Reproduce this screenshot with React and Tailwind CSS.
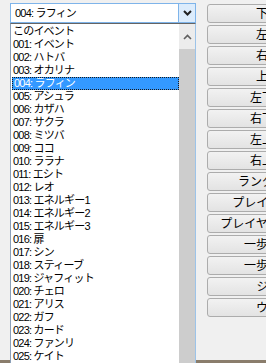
import React from 'react';

const items = [
  'このイベント',
  '001: イベント',
  '002: ハトバ',
  '003: オカリナ',
  '004: ラフィン',
  '005: アシュラ',
  '006: カザハ',
  '007: サクラ',
  '008: ミツバ',
  '009: ココ',
  '010: ララナ',
  '011: エシト',
  '012: レオ',
  '013: エネルギー1',
  '014: エネルギー2',
  '015: エネルギー3',
  '016: 扉',
  '017: シン',
  '018: スティーブ',
  '019: ジャフィット',
  '020: チェロ',
  '021: アリス',
  '022: ガフ',
  '023: カード',
  '024: ファンリ',
  '025: ケイト',
];

const buttons = [
  '下を向く',
  '左を向く',
  '右を向く',
  '上を向く',
  '左下を向く',
  '右下を向く',
  '左上を向く',
  '右上を向く',
  'ランダムに向く',
  'プレイヤーを向く',
  'プレイヤーの逆を向く',
  '一歩前進する',
  '一歩後退する',
  'ジャンプ',
  'ウェイト',
];

const font = { fontFamily: '"Liberation Sans", "Noto Sans CJK JP", sans-serif' };

export default function App() {
  const selected = 4;

  return (
    <div
      className="relative flex w-[266px] h-[363px] overflow-hidden bg-[#f0f0f0] text-black"
      style={font}
    >
      {/* window edge at the very bottom */}
      <div className="absolute left-0 right-0 bottom-0 h-[3px] bg-[#8a7d6c]" />

      {/* event picker */}
      <div className="relative z-10 ml-[10px] w-[186px] shrink-0 flex flex-col">
        <div className="mt-[3px] h-[20px] flex items-stretch border border-[#7eb4ea] bg-white">
          <div className="flex-1 pl-[4px] flex items-center text-[11px] tracking-[-0.8px] leading-none">
            004: ラフィン
          </div>
          <div className="w-[17px] flex items-center justify-center bg-[#dcecfc] border-l border-[#7eb4ea]">
            <svg width="9" height="6" viewBox="0 0 9 6">
              <path d="M1 1 L4.5 4.5 L8 1" fill="none" stroke="#222" strokeWidth="2" />
            </svg>
          </div>
        </div>

        <div className="h-[340px] flex border-l border-[#8a9fb8] border-r border-r-[#9cc3e8] border-t border-t-[#646464] bg-white">
          <div className="flex-1 pt-[1px] pl-[1px] flex flex-col">
            {items.map((t, i) => (
              <div
                key={i}
                className={`h-[13px] shrink-0 pl-[1px] flex items-center text-[11px] tracking-[-0.8px] leading-none whitespace-nowrap ${
                  i === selected
                    ? 'bg-[#3399ff] text-white border border-dotted border-[#1a1a1a] pl-0'
                    : ''
                }`}
              >
                {t}
              </div>
            ))}
          </div>
          <div className="w-[16px] flex flex-col">
            <div className="h-[25px] flex items-center justify-center bg-[#ececec]">
              <svg width="9" height="6" viewBox="0 0 9 6">
                <path d="M1 5 L4.5 1.5 L8 5" fill="none" stroke="#606060" strokeWidth="1.6" />
              </svg>
            </div>
            <div className="flex-1 bg-[#cdcdcd]" />
          </div>
        </div>
      </div>

      {/* command buttons */}
      <div className="relative z-10 ml-[11px] mt-[4px] flex flex-col gap-[2px]">
        {buttons.map((b, i) => (
          <div
            key={i}
            className="w-[146px] h-[19px] shrink-0 flex items-center justify-center rounded-[3px] border border-[#acacac] bg-gradient-to-b from-[#f2f2f2] to-[#e3e3e3] text-[12px] leading-none whitespace-nowrap"
          >
            {b}
          </div>
        ))}
      </div>
    </div>
  );
}
